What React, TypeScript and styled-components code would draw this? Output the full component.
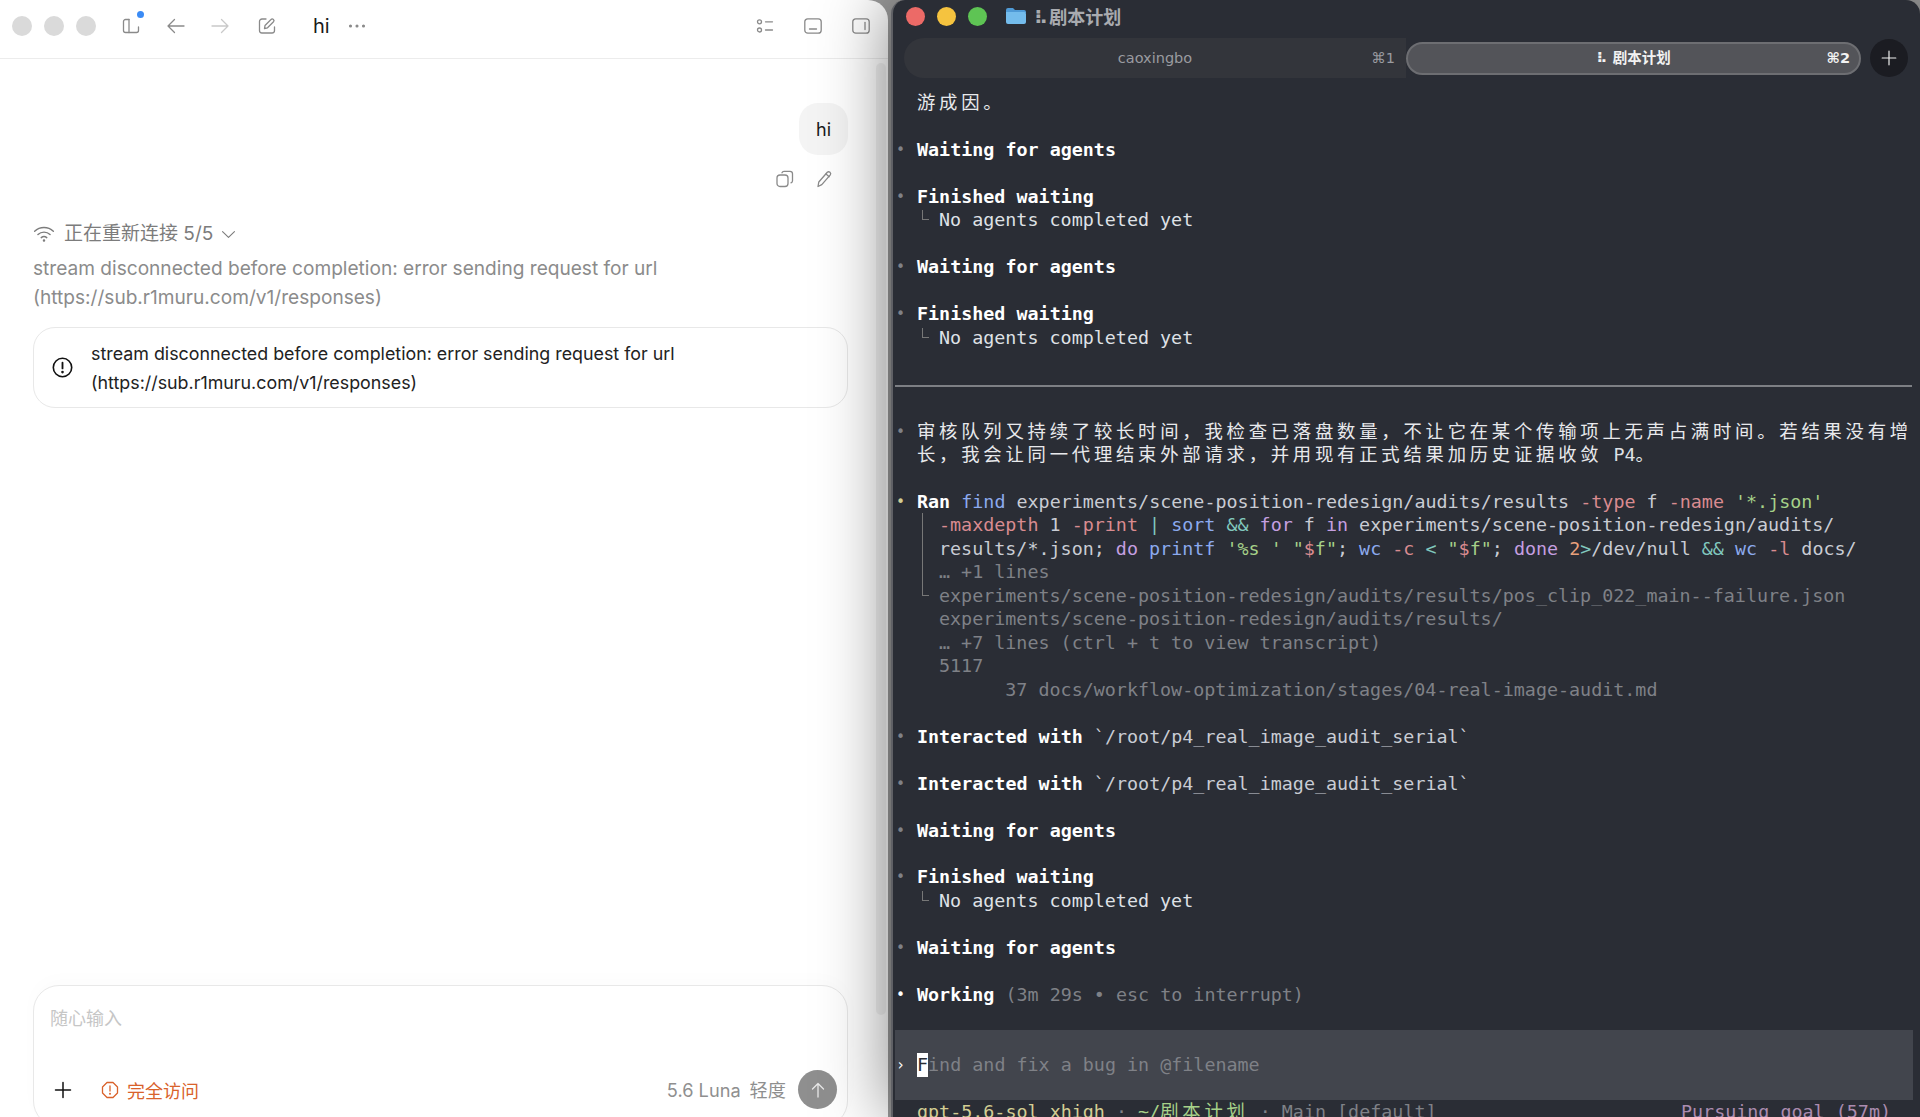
import React from "react";
import styled, { createGlobalStyle } from "styled-components";

const Global = createGlobalStyle`
  html, body { margin: 0; padding: 0; background: #9c9c9c; }
  * { box-sizing: border-box; }
`;

const tones: Record<string, string> = {
  text: "#dfe1e6",
  white: "#ffffff",
  dim: "#7f8187",
  blue: "#8caaee",
  red: "#d98b90",
  green: "#a6d189",
  teal: "#81c8be",
  mauve: "#c59fe0",
  peach: "#e8a07c",
  path: "#c9ccd4",
  yellow: "#d3cd93",
  plum: "#ab8cb0",
};

const Icon = ({ size = 20, children, className }: { size?: number; children: React.ReactNode; className?: string }) => (
  <svg className={className} width={size} height={size} viewBox="0 0 20 20" fill="none" stroke="currentColor" strokeWidth="1.3" strokeLinecap="round" strokeLinejoin="round">
    {children}
  </svg>
);

const App = () => {
  return (
    <Page>
      <Global />
      <ChatWindow>
        <Header>
          <Lights>
            <GreyDot />
            <GreyDot />
            <GreyDot />
          </Lights>
          <ToolIcon $gap={25}>
            <Icon>
              <path d="M8 3.5H4.5a2 2 0 0 0-2 2v9a2 2 0 0 0 2 2h11a2 2 0 0 0 2-2V11" />
              <path d="M8 3.5v13" />
            </Icon>
            <BlueDot />
          </ToolIcon>
          <ToolIcon $gap={25}>
            <Icon>
              <path d="M18 10H2M8.5 3.5 2 10l6.5 6.5" />
            </Icon>
          </ToolIcon>
          <ToolIcon $gap={24} $faint>
            <Icon>
              <path d="M2 10h16M11.5 3.5 18 10l-6.5 6.5" />
            </Icon>
          </ToolIcon>
          <ToolIcon $gap={27}>
            <Icon>
              <path d="M9 3H5a2.5 2.5 0 0 0-2.5 2.5v9A2.5 2.5 0 0 0 5 17h10a2.5 2.5 0 0 0 2.5-2.5V11" />
              <path d="M7.5 12.5 8 9.5l6-6a1.6 1.6 0 0 1 2.5 2.3l-6 6z" />
            </Icon>
          </ToolIcon>
          <ChatTitle>hi</ChatTitle>
          <ToolIcon $gap={0}>
            <Icon>
              <circle cx="3.5" cy="10" r="0.9" fill="currentColor" />
              <circle cx="10" cy="10" r="0.9" fill="currentColor" />
              <circle cx="16.5" cy="10" r="0.9" fill="currentColor" />
            </Icon>
          </ToolIcon>
          <HeaderRight>
            <ToolIcon $gap={0}>
              <Icon>
                <circle cx="4.5" cy="5.8" r="2" />
                <circle cx="4.5" cy="14" r="2" />
                <path d="M10.5 5.8h7M10.5 14h7" />
              </Icon>
            </ToolIcon>
            <ToolIcon $gap={0}>
              <Icon>
                <rect x="1.8" y="2.8" width="16.4" height="14.4" rx="3" />
                <path d="M6.5 13h7" />
              </Icon>
            </ToolIcon>
            <ToolIcon $gap={0}>
              <Icon>
                <rect x="1.8" y="2.8" width="16.4" height="14.4" rx="3" />
                <path d="M14 6.5v7" />
              </Icon>
            </ToolIcon>
          </HeaderRight>
        </Header>

        <Conversation>
          <Thread>
            <UserRow>
              <Bubble>hi</Bubble>
            </UserRow>
            <BubbleActions>
              <ToolIcon $gap={0}>
                <Icon>
                  <rect x="2" y="6" width="11" height="11.5" rx="3" />
                  <path d="M7 3.8c.3-.9 1.100-1.500 2-1.500h6a2.500 2.500 0 0 1 2.500 2.500v7c0 1-.6 1.800-1.500 2.100" />
                </Icon>
              </ToolIcon>
              <ToolIcon $gap={0}>
                <Icon>
                  <path d="M3 17.500l.8-4.500 8.500-9.700a2 2 0 0 1 3 2.600L6.800 15.600z" />
                  <path d="M11 5l3.200 2.700" />
                </Icon>
              </ToolIcon>
            </BubbleActions>
            <StatusRow>
              <WifiMark>
                <Icon size={22}>
                  <path d="M1.500 7.500a12.500 12.500 0 0 1 17 0" />
                  <path d="M4.500 10.500a8 8 0 0 1 11 0" />
                  <path d="M7.500 13.300a3.800 3.800 0 0 1 5 0" />
                  <circle cx="10" cy="16" r="0.5" fill="currentColor" />
                </Icon>
              </WifiMark>
              <StatusText>正在重新连接 5/5</StatusText>
              <Chevron>
                <Icon size={17}>
                  <path d="m3 6.500 7 7 7-7" />
                </Icon>
              </Chevron>
            </StatusRow>
            <ErrorLine>
              stream disconnected before completion: error sending request for url
              <br />
              (https://sub.r1muru.com/v1/responses)
            </ErrorLine>
            <ErrorCard>
              <AlertMark>
                <Icon size={23}>
                  <circle cx="10" cy="10" r="8" strokeWidth="1.400" />
                  <path d="M10 5.800v5" strokeWidth="1.600" />
                  <circle cx="10" cy="14" r="0.5" fill="currentColor" />
                </Icon>
              </AlertMark>
              <ErrorCardText>
                stream disconnected before completion: error sending request for url
                <br />
                (https://sub.r1muru.com/v1/responses)
              </ErrorCardText>
            </ErrorCard>
          </Thread>

          <Composer>
            <Placeholder>随心输入</Placeholder>
            <ComposerBar>
              <PlusMark>
                <Icon size={20}>
                  <path d="M10 2.500v15M2.500 10h15" strokeWidth="1.500" />
                </Icon>
              </PlusMark>
              <AccessTag>
                <Icon size={20}>
                  <path d="M7 2.500h6L17.500 7v6L13 17.500H7L2.500 13V7z" />
                  <path d="M10 6v5" />
                  <circle cx="10" cy="13.800" r="0.4" fill="currentColor" />
                </Icon>
                完全访问
              </AccessTag>
              <ModelGroup>
                <span>5.6 Luna</span>
                <span>轻度</span>
              </ModelGroup>
              <SendButton>
                <Icon size={20}>
                  <path d="M10 17V3.500M4.500 9 10 3.500 15.500 9" />
                </Icon>
              </SendButton>
            </ComposerBar>
          </Composer>
          <ScrollThumb />
        </Conversation>
      </ChatWindow>

      <Terminal>
        <TitleBar>
          <TrafficLight $color="#ec6a67" />
          <TrafficLight $color="#f5c33f" />
          <TrafficLight $color="#5ec454" />
          <FolderMark width="20" height="18" viewBox="0 0 20 18">
            <path d="M0 3a2 2 0 0 1 2-2h5l2 2h9a2 2 0 0 1 2 2v1H0z" fill="#4f9ad6" />
            <path d="M0 5h18a2 2 0 0 1 2 2v8a2 2 0 0 1-2 2H2a2 2 0 0 1-2-2z" fill="#74bcec" />
          </FolderMark>
          <WindowTitle>⠧ 剧本计划</WindowTitle>
        </TitleBar>
        <TabBar>
          <IdleTab>
            <span />
            <TabLabel>caoxingbo</TabLabel>
            <TabKey>⌘1</TabKey>
          </IdleTab>
          <ActiveTab>
            <span />
            <TabLabel>⠧ 剧本计划</TabLabel>
            <TabKey>⌘2</TabKey>
          </ActiveTab>
          <NewTab>
            <Icon size={16}>
              <path d="M10 1.500v17M1.500 10h17" strokeWidth="1.500" />
            </Icon>
          </NewTab>
        </TabBar>

        <Screen>
          <Line><Gutter /><Cjk>游成因。</Cjk></Line>
          <Line />
          <AgentBlock kind="wait" />
          <AgentBlock kind="done" />
          <AgentBlock kind="wait" />
          <AgentBlock kind="done" />
          <Rule />
          <Line />
          <Line>
            <Gutter $tone="dim">•</Gutter>
            <Cjk>审核队列又持续了较长时间，我检查已落盘数量，不让它在某个传输项上无声占满时间。若结果没有增</Cjk>
          </Line>
          <Line>
            <Gutter />
            <Cjk>长，我会让同一代理结束外部请求，并用现有正式结果加历史证据收敛</Cjk>
            <Tok $tone="text"> P4</Tok>
            <Cjk>。</Cjk>
          </Line>
          <Line />
          <Line>
            <Gutter $tone="yellow">•</Gutter>
            <Strong>Ran</Strong>
            <Tok $tone="blue"> find</Tok>
            <Tok $tone="path"> experiments/scene-position-redesign/audits/results</Tok>
            <Tok $tone="red"> -type</Tok>
            <Tok $tone="path"> f</Tok>
            <Tok $tone="red"> -name</Tok>
            <Tok $tone="green"> '*.json'</Tok>
          </Line>
          <Line>
            <Gutter />
            <Tree $kind="bar" />
            <Tok $tone="red">-maxdepth</Tok>
            <Tok $tone="path"> 1</Tok>
            <Tok $tone="red"> -print</Tok>
            <Tok $tone="teal"> |</Tok>
            <Tok $tone="blue"> sort</Tok>
            <Tok $tone="teal"> &amp;&amp;</Tok>
            <Tok $tone="mauve"> for</Tok>
            <Tok $tone="path"> f</Tok>
            <Tok $tone="mauve"> in</Tok>
            <Tok $tone="path"> experiments/scene-position-redesign/audits/</Tok>
          </Line>
          <Line>
            <Gutter />
            <Tree $kind="bar" />
            <Tok $tone="path">results/*.json;</Tok>
            <Tok $tone="mauve"> do</Tok>
            <Tok $tone="blue"> printf</Tok>
            <Tok $tone="green"> '%s '</Tok>
            <Tok $tone="green"> "</Tok>
            <Tok $tone="red">$</Tok>
            <Tok $tone="green">f"</Tok>
            <Tok $tone="path">;</Tok>
            <Tok $tone="blue"> wc</Tok>
            <Tok $tone="red"> -c</Tok>
            <Tok $tone="teal"> &lt;</Tok>
            <Tok $tone="green"> "</Tok>
            <Tok $tone="red">$</Tok>
            <Tok $tone="green">f"</Tok>
            <Tok $tone="path">;</Tok>
            <Tok $tone="mauve"> done</Tok>
            <Tok $tone="peach"> 2</Tok>
            <Tok $tone="teal">&gt;</Tok>
            <Tok $tone="path">/dev/null</Tok>
            <Tok $tone="teal"> &amp;&amp;</Tok>
            <Tok $tone="blue"> wc</Tok>
            <Tok $tone="red"> -l</Tok>
            <Tok $tone="path"> docs/</Tok>
          </Line>
          <Line><Gutter /><Tree $kind="bar" /><Tok $tone="dim">… +1 lines</Tok></Line>
          <Line><Gutter /><Tree $kind="end" /><Tok $tone="dim">experiments/scene-position-redesign/audits/results/pos_clip_022_main--failure.json</Tok></Line>
          <Line><Gutter /><Tree /><Tok $tone="dim">experiments/scene-position-redesign/audits/results/</Tok></Line>
          <Line><Gutter /><Tree /><Tok $tone="dim">… +7 lines (ctrl + t to view transcript)</Tok></Line>
          <Line><Gutter /><Tree /><Tok $tone="dim">5117</Tok></Line>
          <Line><Gutter /><Tree /><Tok $tone="dim">      37 docs/workflow-optimization/stages/04-real-image-audit.md</Tok></Line>
          <Line />
          <Line>
            <Gutter $tone="dim">•</Gutter>
            <Strong>Interacted with</Strong>
            <Tok $tone="path"> `/root/p4_real_image_audit_serial`</Tok>
          </Line>
          <Line />
          <Line>
            <Gutter $tone="dim">•</Gutter>
            <Strong>Interacted with</Strong>
            <Tok $tone="path"> `/root/p4_real_image_audit_serial`</Tok>
          </Line>
          <Line />
          <AgentBlock kind="wait" />
          <AgentBlock kind="done" />
          <AgentBlock kind="wait" />
          <Line>
            <Gutter $tone="white">•</Gutter>
            <Strong>Working</Strong>
            <Tok $tone="dim"> (3m 29s • esc to interrupt)</Tok>
          </Line>
          <Line />
          <InputBox>
            <Gutter $tone="white">›</Gutter>
            <Cursor>F</Cursor>
            <Tok $tone="dim">ind and fix a bug in @filename</Tok>
          </InputBox>
          <FooterLine>
            <span>
              <Tok $tone="yellow">gpt-5.6-sol xhigh</Tok>
              <Tok $tone="dim"> · </Tok>
              <Tok $tone="green">~/</Tok>
              <Cjk $tone="green">剧本计划</Cjk>
              <Tok $tone="dim"> · Main [default]</Tok>
            </span>
            <Tok $tone="plum">Pursuing goal (57m)</Tok>
          </FooterLine>
        </Screen>
      </Terminal>
    </Page>
  );
};

const AgentBlock = ({ kind }: { kind: "wait" | "done" }) =>
  kind === "wait" ? (
    <>
      <Line>
        <Gutter $tone="dim">•</Gutter>
        <Strong>Waiting for agents</Strong>
      </Line>
      <Line />
    </>
  ) : (
    <>
      <Line>
        <Gutter $tone="dim">•</Gutter>
        <Strong>Finished waiting</Strong>
      </Line>
      <Line>
        <Gutter />
        <Tree $kind="lone" />
        <Tok $tone="text">No agents completed yet</Tok>
      </Line>
      <Line />
    </>
  );

const Page = styled.div`
  display: flex;
  width: 1920px;
  height: 1117px;
  overflow: hidden;
  background: #9c9c9c;
  font-family: Inter, "Noto Sans CJK SC", sans-serif;
`;

const ChatWindow = styled.div`
  flex: 0 0 888px;
  display: flex;
  flex-direction: column;
  height: 1117px;
  margin-right: 3px;
  background: #fff;
  border-top-right-radius: 20px;
`;

const Header = styled.header`
  flex: none;
  display: flex;
  align-items: center;
  height: 59px;
  padding: 0 17px 6px 12px;
  border-bottom: 1px solid #ececec;
`;

const Lights = styled.div`
  display: flex;
  gap: 12px;
`;

const GreyDot = styled.span`
  width: 20px;
  height: 20px;
  border-radius: 50%;
  background: #dadada;
`;

const ToolIcon = styled.span<{ $gap: number; $faint?: boolean }>`
  position: relative;
  display: flex;
  margin-left: ${(p) => p.$gap}px;
  color: ${(p) => (p.$faint ? "#c9c9c9" : "#8a8a8a")};
`;

const BlueDot = styled.span`
  position: absolute;
  top: -5px;
  right: -3px;
  width: 7px;
  height: 7px;
  border-radius: 50%;
  background: #3b8bf5;
`;

const ChatTitle = styled.span`
  margin: 0 17px 0 36px;
  font-size: 20px;
  color: #1a1a1a;
`;

const HeaderRight = styled.div`
  display: flex;
  gap: 28px;
  margin-left: auto;
`;

const Conversation = styled.main`
  position: relative;
  flex: 1;
  display: flex;
  flex-direction: column;
  justify-content: space-between;
  min-height: 0;
  padding: 44px 40px 0 33px;
`;

const Thread = styled.div`
  display: flex;
  flex-direction: column;
`;

const UserRow = styled.div`
  display: flex;
  justify-content: flex-end;
`;

const Bubble = styled.div`
  display: flex;
  align-items: center;
  justify-content: center;
  width: 49px;
  height: 52px;
  border-radius: 19px;
  background: #f4f4f4;
  font-size: 18px;
  color: #1a1a1a;
`;

const BubbleActions = styled.div`
  display: flex;
  justify-content: flex-end;
  gap: 20px;
  margin-top: 14px;
  padding-right: 13px;
`;

const StatusRow = styled.div`
  display: flex;
  align-items: center;
  margin-top: 31px;
  color: #7c7c7c;
`;

const WifiMark = styled.span`
  display: flex;
  margin-right: 9px;
`;

const StatusText = styled.span`
  font-size: 19px;
  line-height: 28px;
`;

const Chevron = styled.span`
  display: flex;
  margin-left: 7px;
`;

const ErrorLine = styled.p`
  margin: 6px 0 0;
  font-size: 19.1px;
  line-height: 29px;
  color: #8b8b8b;
`;

const ErrorCard = styled.div`
  display: flex;
  align-items: center;
  height: 81px;
  margin-top: 15px;
  padding-left: 17px;
  border: 1px solid #e8e8e8;
  border-radius: 22px;
`;

const AlertMark = styled.span`
  display: flex;
  margin-right: 17px;
  color: #111;
`;

const ErrorCardText = styled.p`
  margin: 0;
  font-size: 17.85px;
  line-height: 29px;
  color: #222;
`;

const Composer = styled.section`
  flex: none;
  display: flex;
  flex-direction: column;
  justify-content: space-between;
  height: 142px;
  margin-bottom: -10px;
  padding: 21px 10px 17px 16px;
  border: 1px solid #e8e8e8;
  border-radius: 26px;
  background: #fff;
  box-shadow: 0 -6px 18px rgba(0, 0, 0, 0.015);
`;

const Placeholder = styled.div`
  font-size: 18px;
  line-height: 24px;
  color: #c6c6c6;
`;

const ComposerBar = styled.div`
  display: flex;
  align-items: center;
`;

const PlusMark = styled.span`
  display: flex;
  margin: 0 27px 0 3px;
  color: #111;
`;

const AccessTag = styled.span`
  display: flex;
  align-items: center;
  gap: 7px;
  font-size: 18px;
  color: #d9622b;
`;

const ModelGroup = styled.span`
  display: flex;
  align-items: center;
  gap: 9px;
  margin-left: auto;
  font-size: 18.2px;
  line-height: 26px;
  color: #8f8f8f;
`;

const SendButton = styled.span`
  display: flex;
  align-items: center;
  justify-content: center;
  width: 39px;
  height: 39px;
  margin-left: 12px;
  border-radius: 50%;
  background: #8f8f8f;
  color: #e8e8e8;
`;

const ScrollThumb = styled.span`
  position: absolute;
  top: 4px;
  right: 2px;
  width: 10px;
  height: 952px;
  border-radius: 5px;
  background: rgba(0, 0, 0, 0.05);
`;

const Terminal = styled.section`
  position: relative;
  flex: 1;
  display: flex;
  flex-direction: column;
  height: 1117px;
  overflow: hidden;
  border-left: 2px solid #5f6065;
  border-top-left-radius: 14px;
  border-top-right-radius: 14px;
  background: #2a2d35;
  box-shadow: 0 0 70px rgba(0, 0, 0, 0.5);
`;

const TitleBar = styled.div`
  flex: none;
  display: flex;
  align-items: center;
  gap: 12px;
  height: 32px;
  padding-left: 13px;
`;

const TrafficLight = styled.span<{ $color: string }>`
  width: 19px;
  height: 19px;
  border-radius: 50%;
  background: ${(p) => p.$color};
`;

const FolderMark = styled.svg`
  margin-left: 7px;
`;

const WindowTitle = styled.span`
  margin-left: -4px;
  font-family: "DejaVu Sans", "Noto Sans CJK SC", sans-serif;
  font-size: 18px;
  font-weight: 700;
  word-spacing: -5px;
  color: #a9abb0;
`;

const TabBar = styled.div`
  flex: none;
  display: flex;
  align-items: center;
  height: 40px;
  margin: 6px 0 13px;
  padding-left: 11px;
`;

const IdleTab = styled.div`
  flex: 0 0 502px;
  display: grid;
  grid-template-columns: 1fr auto 1fr;
  align-items: center;
  height: 40px;
  padding: 0 11px;
  border-radius: 20px 0 0 20px;
  background: #33353b;
  color: #9a9ba0;
`;

const ActiveTab = styled.div`
  flex: 0 0 455px;
  display: grid;
  grid-template-columns: 1fr auto 1fr;
  align-items: center;
  height: 33px;
  padding: 0 9px;
  border: 2px solid #6d6e72;
  border-radius: 17px;
  background: #535459;
  color: #f2f2f2;
  font-weight: 600;
`;

const TabLabel = styled.span`
  font-family: "DejaVu Sans", Inter, "Noto Sans CJK SC", sans-serif;
  font-size: 14.5px;
  line-height: 18px;
`;

const TabKey = styled.span`
  justify-self: end;
  font-family: "DejaVu Sans", sans-serif;
  font-size: 14.5px;
`;

const NewTab = styled.span`
  flex: none;
  display: flex;
  align-items: center;
  justify-content: center;
  width: 38px;
  height: 38px;
  margin-left: 9px;
  border-radius: 50%;
  background: #1b1c22;
  color: #f0f0f0;
`;

const Screen = styled.div`
  flex: 1;
  min-height: 0;
  padding-left: 2px;
  font-family: "DejaVu Sans Mono", "Noto Sans CJK SC", monospace;
  font-size: 18.36px;
  line-height: 23.47px;
  white-space: pre;
`;

const Line = styled.div`
  display: flex;
  height: 23.47px;
`;

const Gutter = styled.span<{ $tone?: string }>`
  flex: none;
  width: 22px;
  padding: 1px 0 0 1px;
  font-size: 15px;
  color: ${(p) => tones[p.$tone || "dim"]};
`;

const Tok = styled.span<{ $tone: string }>`
  color: ${(p) => tones[p.$tone]};
`;

const Strong = styled.span`
  font-weight: 700;
  color: #fff;
`;

const Cjk = styled.span<{ $tone?: string }>`
  letter-spacing: 3.75px;
  color: ${(p) => (p.$tone ? tones[p.$tone] : "#e8e9ec")};
`;

const Tree = styled.span<{ $kind?: "bar" | "end" | "lone" }>`
  flex: none;
  width: 22px;
  &::before {
    content: "";
    display: ${(p) => (p.$kind ? "block" : "none")};
    width: 6px;
    height: ${(p) => (p.$kind === "bar" ? "23.5px" : p.$kind === "end" ? "11px" : "9px")};
    margin: ${(p) => (p.$kind === "lone" ? "2px" : "0")} 0 0 5px;
    border-left: 1px solid #777;
    border-bottom: ${(p) => (p.$kind === "bar" ? "none" : "1px solid #777")};
  }
`;

const Rule = styled.div`
  height: 23.47px;
  margin-right: 8px;
  &::after {
    content: "";
    display: block;
    height: 12.5px;
    border-bottom: 2px solid #7d7f84;
  }
`;

const InputBox = styled.div`
  display: flex;
  align-items: center;
  height: 70.4px;
  margin-right: 7px;
  background: #42454d;
`;

const Cursor = styled.span`
  background: #fff;
  color: #2a2d35;
`;

const FooterLine = styled.div`
  display: flex;
  justify-content: space-between;
  height: 23.47px;
  padding: 0 29px 0 22px;
`;

export default App;
